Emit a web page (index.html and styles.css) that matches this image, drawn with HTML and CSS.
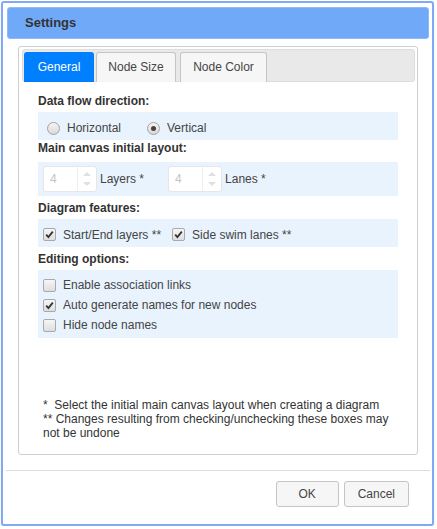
FILE: index.html
```html
<!DOCTYPE html>
<html>
<head>
<meta charset="utf-8">
<link rel="stylesheet" href="styles.css">
</head>
<body>
<div class="dialog">
  <div class="titlebar">Settings</div>
  <div class="card">
    <div class="tabs">
      <div class="tab active">General</div>
      <div class="tab tab-size">Node Size</div>
      <div class="tab tab-color">Node Color</div>
    </div>
    <div class="panel">
      <div class="label label-first">Data flow direction:</div>
      <div class="row row-radio">
        <span class="opt opt-wide"><span class="radio"></span>Horizontal</span>
        <span class="opt"><span class="radio checked"></span>Vertical</span>
      </div>
      <div class="label label-tight">Main canvas initial layout:</div>
      <div class="row row-spin">
        <span class="spinner"><span class="spin-val">4</span><span class="spin-btns"><span class="arrow up"></span><span class="arrow down"></span></span></span>
        <span class="spin-label spin-label-wide">Layers *</span>
        <span class="spinner"><span class="spin-val">4</span><span class="spin-btns"><span class="arrow up"></span><span class="arrow down"></span></span></span>
        <span class="spin-label">Lanes *</span>
      </div>
      <div class="label">Diagram features:</div>
      <div class="row row-check">
        <span class="opt opt-mid"><span class="check checked"><svg viewBox="0 0 13 13" width="13" height="13"><path d="M3.2 6.6 L5.4 9 L9.8 3.6" fill="none" stroke="#333" stroke-width="1.8"/></svg></span>Start/End layers **</span>
        <span class="opt"><span class="check checked"><svg viewBox="0 0 13 13" width="13" height="13"><path d="M3.2 6.6 L5.4 9 L9.8 3.6" fill="none" stroke="#333" stroke-width="1.8"/></svg></span>Side swim lanes **</span>
      </div>
      <div class="label">Editing options:</div>
      <div class="row row-list">
        <span class="opt line"><span class="check"></span>Enable association links</span>
        <span class="opt line"><span class="check checked"><svg viewBox="0 0 13 13" width="13" height="13"><path d="M3.2 6.6 L5.4 9 L9.8 3.6" fill="none" stroke="#333" stroke-width="1.8"/></svg></span>Auto generate names for new nodes</span>
        <span class="opt line"><span class="check"></span>Hide node names</span>
      </div>
      <div class="notes">*&nbsp; Select the initial main canvas layout when creating a diagram<br>** Changes resulting from checking/unchecking these boxes may not be undone</div>
    </div>
  </div>
  <div class="sep"></div>
  <div class="buttons">
    <button class="btn">OK</button>
    <button class="btn">Cancel</button>
  </div>
</div>
</body>
</html>
```
FILE: styles.css
```css
html, body {
  margin: 0;
  padding: 0;
  background: #fff;
}
body {
  font-family: "Liberation Sans", Arial, sans-serif;
  font-size: 12px;
  color: #333;
}
.dialog {
  margin: 1px 0 0 1px;
  width: 433px;
  height: 525px;
  box-sizing: border-box;
  border: 2px solid #82a9f5;
  border-radius: 3px;
  background: #fff;
  display: flex;
  flex-direction: column;
  box-shadow: 0 2px 3px rgba(0,0,0,0.08);
}
.titlebar {
  margin: 4px 3px 0 4px;
  height: 32px;
  box-sizing: border-box;
  border: 1px solid #8fbaf9;
  border-radius: 3px;
  background: #71a9f9;
  padding-left: 17px;
  line-height: 30px;
  font-size: 13px;
  font-weight: bold;
  color: #333;
}
.card {
  margin: 7px 14px 0 15px;
  height: 409px;
  box-sizing: border-box;
  border: 1px solid #cfcfcf;
  border-radius: 3px;
  padding: 2px 2px 0 3px;
  display: flex;
  flex-direction: column;
}
.tabs {
  height: 33px;
  box-sizing: border-box;
  border: 1px solid #dddddd;
  border-radius: 3px;
  background: #e9e9e9;
  padding: 2px 2px 0 1px;
  display: flex;
  align-items: flex-start;
  gap: 2px;
}
.tab {
  height: 30px;
  box-sizing: border-box;
  border: 1px solid #c5c5c5;
  border-bottom: none;
  border-radius: 3px 3px 0 0;
  background: #f6f6f6;
  color: #454545;
  line-height: 29px;
  padding: 0 12px;
  white-space: nowrap;
}
.tab.active {
  width: 70px;
  padding: 0;
  text-align: center;
  background: #007fff;
  border-color: #007fff;
  color: #fff;
}
.tab-size {
  width: 80px;
  padding: 0;
  text-align: center;
}
.tab-color {
  width: 87px;
  padding: 0;
  text-align: center;
  margin-left: 2px;
}
.panel {
  flex: 1;
  display: flex;
  flex-direction: column;
  padding: 11px 17px 14px 16px;
}
.label {
  font-weight: bold;
  line-height: 16px;
  color: #333;
  margin-top: 4px;
}
.label-first {
  margin-top: 0;
}
.label-tight {
  margin-top: 0;
}
.row {
  background: #e9f3fe;
  margin-top: 3px;
  display: flex;
  align-items: center;
  color: #444;
}
.row-radio {
  height: 28px;
  box-sizing: border-box;
  padding: 4px 0 0 9px;
}
.row-spin {
  height: 34px;
  margin-top: 6px;
  padding: 0 5px;
}
.row-check {
  height: 28px;
  box-sizing: border-box;
  padding: 3px 0 0 5px;
}
.row-list {
  flex-direction: column;
  align-items: flex-start;
  padding: 5px 0 3px 5px;
}
.opt {
  display: flex;
  align-items: center;
  white-space: nowrap;
}
.opt.line {
  height: 20px;
}
.opt-wide {
  margin-right: 26px;
}
.opt-mid {
  margin-right: 11px;
}
.radio {
  width: 13px;
  height: 13px;
  box-sizing: border-box;
  border-radius: 50%;
  border: 1px solid #a3a3a3;
  background: linear-gradient(#f4f4f4, #d9d9d9);
  margin-right: 7px;
  display: flex;
  align-items: center;
  justify-content: center;
}
.radio.checked::after {
  content: "";
  width: 5px;
  height: 5px;
  border-radius: 50%;
  background: #444;
}
.check {
  width: 13px;
  height: 13px;
  box-sizing: border-box;
  border-radius: 2px;
  border: 1px solid #a9a9a9;
  background: linear-gradient(#f6f6f6, #dedede);
  margin-right: 7px;
  position: relative;
  flex: none;
}
.check svg {
  position: absolute;
  left: -1px;
  top: -1px;
}
.spinner {
  width: 54px;
  height: 26px;
  box-sizing: border-box;
  border: 1px solid #e6e6e6;
  border-radius: 3px;
  background: #fff;
  display: flex;
}
.spin-val {
  flex: 1;
  color: #c4c4c4;
  line-height: 24px;
  padding-left: 6px;
}
.spin-btns {
  width: 19px;
  border-left: 1px solid #eeeeee;
  display: flex;
  flex-direction: column;
  align-items: center;
  justify-content: space-between;
  padding: 5px 0;
  box-sizing: border-box;
}
.arrow {
  width: 0;
  height: 0;
  border-left: 4px solid transparent;
  border-right: 4px solid transparent;
}
.arrow.up {
  border-bottom: 4px solid #e0e0e0;
}
.arrow.down {
  border-top: 4px solid #e0e0e0;
}
.spin-label {
  margin-left: 3px;
  color: #444;
}
.spin-label-wide {
  margin-right: 24px;
}
.notes {
  margin-top: auto;
  padding-left: 5px;
  line-height: 14px;
  color: #333;
}
.sep {
  margin: 15px 2px 0 3px;
  height: 1px;
  background: #dddddd;
}
.buttons {
  margin-top: 10px;
  padding-right: 23px;
  display: flex;
  justify-content: flex-end;
  gap: 5px;
}
.btn {
  height: 26px;
  min-width: 63px;
  box-sizing: border-box;
  border: 1px solid #c5c5c5;
  border-radius: 3px;
  background: #f6f6f6;
  color: #454545;
  font-family: "Liberation Sans", Arial, sans-serif;
  font-size: 12px;
  padding: 0 13px;
}
```
